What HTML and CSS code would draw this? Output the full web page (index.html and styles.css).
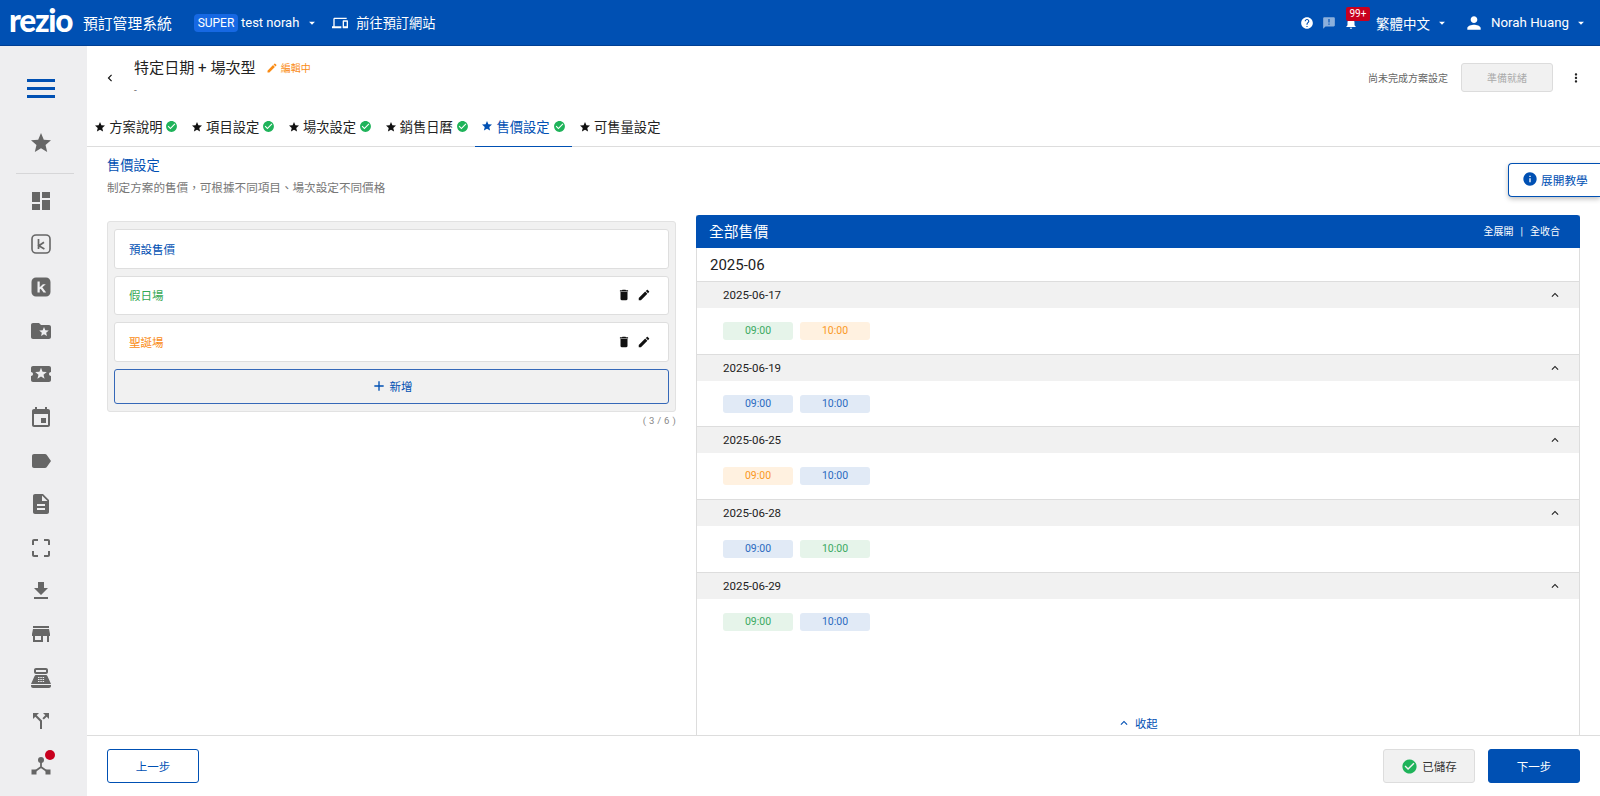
FILE: index.html
```html
<!DOCTYPE html>
<html lang="zh-Hant">
<head>
<meta charset="utf-8">
<title>rezio 預訂管理系統</title>
<link rel="stylesheet" href="styles.css">
</head>
<body>
<svg class="sprite" xmlns="http://www.w3.org/2000/svg">
  <symbol id="i-star" viewBox="0 0 24 24"><path d="M12 17.27L18.18 21l-1.64-7.03L22 9.24l-7.19-.61L12 2 9.19 8.63 2 9.24l5.46 4.73L5.82 21z"/></symbol>
  <symbol id="i-dash" viewBox="0 0 24 24"><path d="M3 13h8V3H3v10zm0 8h8v-6H3v6zm10 0h8V11h-8v10zm0-18v6h8V3h-8z"/></symbol>
  <symbol id="i-k1" viewBox="0 0 24 24"><rect x="3" y="3" width="18" height="18" rx="4" fill="none" stroke="currentColor" stroke-width="1.6"/><path d="M9.5 7v10M15 10.2l-5.2 3.6L15.4 17" fill="none" stroke="currentColor" stroke-width="1.7"/></symbol>
  <symbol id="i-k2" viewBox="0 0 24 24"><path fill-rule="evenodd" d="M7 2.5h10A4.500 4.500 0 0 1 21.500 7v10a4.500 4.500 0 0 1-4.500 4.500H7A4.500 4.500 0 0 1 2.500 17V7A4.500 4.500 0 0 1 7 2.500zM8.500 6.500v11h2.200v-3l1-.8 2.800 3.800h2.700l-3.900-5.200 3.500-3h-2.900l-3.200 2.900V6.500z"/></symbol>
  <symbol id="i-folder" viewBox="0 0 24 24"><path d="M20 6h-8l-2-2H4c-1.100 0-1.990.9-1.990 2L2 18c0 1.100.9 2 2 2h16c1.100 0 2-.9 2-2V8c0-1.100-.9-2-2-2zm-2.060 11L15 15.280 12.060 17l.78-3.330-2.590-2.240 3.410-.29L15 8l1.340 3.140 3.410.29-2.590 2.240.78 3.330z"/></symbol>
  <symbol id="i-ticket" viewBox="0 0 24 24"><path d="M20 12c0-1.100.9-2 2-2V6c0-1.100-.9-2-2-2H4c-1.100 0-1.990.9-1.990 2v4c1.100 0 1.990.9 1.990 2s-.89 2-2 2v4c0 1.100.9 2 2 2h16c1.100 0 2-.9 2-2v-4c-1.100 0-2-.9-2-2zm-4.420 4.800L12 14.500l-3.580 2.300 1.080-4.120-3.290-2.690 4.240-.25L12 5.800l1.540 3.950 4.240.25-3.290 2.690 1.090 4.110z"/></symbol>
  <symbol id="i-event" viewBox="0 0 24 24"><path d="M17 12h-5v5h5v-5zM16 1v2H8V1H6v2H5c-1.110 0-1.990.9-1.990 2L3 19c0 1.100.89 2 2 2h14c1.100 0 2-.9 2-2V5c0-1.100-.9-2-2-2h-1V1h-2zm3 18H5V8h14v11z"/></symbol>
  <symbol id="i-label" viewBox="0 0 24 24"><path d="M17.630 5.840C17.270 5.330 16.670 5 16 5L5 5.010C3.900 5.010 3 5.900 3 7v10c0 1.100.9 1.990 2 1.990L16 19c.67 0 1.270-.33 1.630-.84L22 12l-4.370-6.160z"/></symbol>
  <symbol id="i-desc" viewBox="0 0 24 24"><path d="M14 2H6c-1.100 0-1.990.9-1.990 2L4 20c0 1.100.89 2 1.990 2H18c1.100 0 2-.9 2-2V8l-6-6zm2 16H8v-2h8v2zm0-4H8v-2h8v2zm-3-5V3.500L18.500 9H13z"/></symbol>
  <symbol id="i-crop" viewBox="0 0 24 24"><path d="M3 5v4h2V5h4V3H5c-1.100 0-2 .9-2 2zm2 10H3v4c0 1.100.9 2 2 2h4v-2H5v-4zm14 4h-4v2h4c1.100 0 2-.9 2-2v-4h-2v4zm0-16h-4v2h4v4h2V5c0-1.100-.9-2-2-2z"/></symbol>
  <symbol id="i-down" viewBox="0 0 24 24"><path d="M19 9h-4V3H9v6H5l7 7 7-7zM5 18v2h14v-2H5z"/></symbol>
  <symbol id="i-store" viewBox="0 0 24 24"><path d="M20 4H4v2h16V4zm1 10v-2l-1-5H4l-1 5v2h1v6h10v-6h4v6h2v-6h1zm-9 4H6v-4h6v4z"/></symbol>
  <symbol id="i-pos" viewBox="0 0 24 24"><path fill-rule="evenodd" d="M7 2h10c1.100 0 2 .9 2 2v2c0 1.100-.9 2-2 2H7c-1.100 0-2-.9-2-2V4c0-1.100.9-2 2-2zm0 2v2h10V4H7zM7.300 9h9.400c.8 0 1.500.47 1.830 1.190L22 18H2l3.470-7.810C5.790 9.470 6.510 9 7.300 9zM9 11v1h1.500v-1H9zm2.300 0v1h1.500v-1h-1.500zm2.300 0v1h1.500v-1h-1.500zM9 13v1h1.500v-1H9zm2.300 0v1h1.500v-1h-1.500zm2.300 0v1h1.500v-1h-1.500zM9 15v1h1.500v-1H9zm2.300 0v1h1.500v-1h-1.500zm2.300 0v1h1.500v-1h-1.500zM2 19h20v1c0 1.100-.9 2-2 2H4c-1.100 0-2-.9-2-2v-1z"/></symbol>
  <symbol id="i-split" viewBox="0 0 24 24"><path d="M14 4l2.290 2.290-2.880 2.880 1.420 1.420 2.880-2.880L20 10V4zm-4 0H4v6l2.290-2.290 4.710 4.700V20h2v-8.410l-5.290-5.300z"/></symbol>
  <symbol id="i-hub" viewBox="0 0 24 24"><circle cx="12" cy="7" r="3"/><rect x="2.500" y="16.500" width="5" height="5"/><rect x="16.500" y="16.500" width="5" height="5"/><path d="M12 9v5.500M12 14l-7 5M12 14l7 5" fill="none" stroke="currentColor" stroke-width="1.800"/></symbol>
  <symbol id="i-help" viewBox="0 0 24 24"><path d="M12 2C6.480 2 2 6.480 2 12s4.480 10 10 10 10-4.480 10-10S17.520 2 12 2zm1 17h-2v-2h2v2zm2.070-7.750l-.9.920C13.450 12.900 13 13.500 13 15h-2v-.5c0-1.100.45-2.100 1.170-2.830l1.240-1.260c.37-.36.59-.86.59-1.410 0-1.100-.9-2-2-2s-2 .9-2 2H8c0-2.210 1.790-4 4-4s4 1.790 4 4c0 .88-.36 1.680-.93 2.250z"/></symbol>
  <symbol id="i-feedback" viewBox="0 0 24 24"><path d="M20 2H4c-1.100 0-1.990.9-1.990 2L2 22l4-4h14c1.100 0 2-.9 2-2V4c0-1.100-.9-2-2-2zm-7 9h-2V5h2v6zm0 4h-2v-2h2v2z"/></symbol>
  <symbol id="i-bell" viewBox="0 0 24 24"><path d="M12 22c1.100 0 2-.9 2-2h-4c0 1.100.89 2 2 2zm6-6v-5c0-3.070-1.640-5.640-4.500-6.320V4c0-.83-.67-1.500-1.500-1.500s-1.500.67-1.500 1.500v.68C7.630 5.360 6 7.920 6 11v5l-2 2v1h16v-1l-2-2z"/></symbol>
  <symbol id="i-person" viewBox="0 0 24 24"><path d="M12 12c2.210 0 4-1.790 4-4s-1.790-4-4-4-4 1.790-4 4 1.790 4 4 4zm0 2c-2.670 0-8 1.340-8 4v2h16v-2c0-2.660-5.330-4-8-4z"/></symbol>
  <symbol id="i-devices" viewBox="0 0 24 24"><path d="M4 6h18V4H4c-1.100 0-2 .9-2 2v11H0v3h14v-3H4V6zm19 2h-6c-.55 0-1 .45-1 1v10c0 .55.45 1 1 1h6c.55 0 1-.45 1-1V9c0-.55-.45-1-1-1zm-1 9h-4v-7h4v7z"/></symbol>
  <symbol id="i-edit" viewBox="0 0 24 24"><path d="M3 17.250V21h3.750L17.810 9.940l-3.750-3.750L3 17.250zM20.710 7.040c.39-.39.39-1.020 0-1.410l-2.340-2.340c-.39-.39-1.020-.39-1.410 0l-1.830 1.830 3.750 3.750 1.830-1.830z"/></symbol>
  <symbol id="i-delete" viewBox="0 0 24 24"><path d="M6 19c0 1.100.9 2 2 2h8c1.100 0 2-.9 2-2V7H6v12zM19 4h-3.500l-1-1h-5l-1 1H5v2h14V4z"/></symbol>
  <symbol id="i-check" viewBox="0 0 24 24"><path d="M12 2C6.480 2 2 6.480 2 12s4.480 10 10 10 10-4.480 10-10S17.520 2 12 2zm-2 15l-5-5 1.410-1.410L10 14.170l7.590-7.590L19 8l-9 9z"/></symbol>
  <symbol id="i-info" viewBox="0 0 24 24"><path d="M12 2C6.480 2 2 6.480 2 12s4.480 10 10 10 10-4.480 10-10S17.520 2 12 2zm1 15h-2v-6h2v6zm0-8h-2V7h2v2z"/></symbol>
  <symbol id="i-less" viewBox="0 0 24 24"><path d="M12 8l-6 6 1.410 1.410L12 10.830l4.590 4.580L18 14z"/></symbol>
  <symbol id="i-left" viewBox="0 0 24 24"><path d="M15.410 7.410L14 6l-6 6 6 6 1.410-1.410L10.830 12z"/></symbol>
  <symbol id="i-more" viewBox="0 0 24 24"><path d="M12 8c1.100 0 2-.9 2-2s-.9-2-2-2-2 .9-2 2 .9 2 2 2zm0 2c-1.100 0-2 .9-2 2s.9 2 2 2 2-.9 2-2-.9-2-2-2zm0 6c-1.100 0-2 .9-2 2s.9 2 2 2 2-.9 2-2-.9-2-2-2z"/></symbol>
  <symbol id="i-caret" viewBox="0 0 24 24"><path d="M7 10l5 5 5-5z"/></symbol>
  <symbol id="i-add" viewBox="0 0 24 24"><path d="M19 13h-6v6h-2v-6H5v-2h6V5h2v6h6v2z"/></symbol>
</svg>

<header class="topbar">
  <span class="logo">rezio</span>
  <span class="app-name">預訂管理系統</span>
  <span class="super">SUPER</span>
  <span class="account">test norah</span>
  <svg class="caret caret-account"><use href="#i-caret"/></svg>
  <svg class="devices"><use href="#i-devices"/></svg>
  <span class="site-link">前往預訂網站</span>
  <div class="top-right">
    <svg class="top-icon"><use href="#i-help"/></svg>
    <svg class="top-icon dim"><use href="#i-feedback"/></svg>
    <span class="bell">
      <svg class="top-icon"><use href="#i-bell"/></svg>
      <span class="bell-badge">99+</span>
    </span>
    <span class="lang">繁體中文</span>
    <svg class="caret caret-lang"><use href="#i-caret"/></svg>
    <svg class="person"><use href="#i-person"/></svg>
    <span class="user">Norah Huang</span>
    <svg class="caret caret-user"><use href="#i-caret"/></svg>
  </div>
</header>

<div class="shell">
  <nav class="sidebar">
    <div class="menu-btn"><span></span><span></span><span></span></div>
    <a class="nav-item nav-fav"><svg><use href="#i-star"/></svg></a>
    <div class="nav-divider"></div>
    <a class="nav-item"><svg><use href="#i-dash"/></svg></a>
    <a class="nav-item"><svg><use href="#i-k1"/></svg></a>
    <a class="nav-item"><svg><use href="#i-k2"/></svg></a>
    <a class="nav-item"><svg><use href="#i-folder"/></svg></a>
    <a class="nav-item"><svg><use href="#i-ticket"/></svg></a>
    <a class="nav-item"><svg><use href="#i-event"/></svg></a>
    <a class="nav-item"><svg><use href="#i-label"/></svg></a>
    <a class="nav-item"><svg><use href="#i-desc"/></svg></a>
    <a class="nav-item"><svg><use href="#i-crop"/></svg></a>
    <a class="nav-item"><svg><use href="#i-down"/></svg></a>
    <a class="nav-item"><svg><use href="#i-store"/></svg></a>
    <a class="nav-item"><svg><use href="#i-pos"/></svg></a>
    <a class="nav-item"><svg><use href="#i-split"/></svg></a>
    <a class="nav-item nav-hub"><svg><use href="#i-hub"/></svg><span class="nav-dot"></span></a>
  </nav>

  <main class="main">
    <div class="page-head">
      <svg class="back"><use href="#i-left"/></svg>
      <div class="title-block">
        <div class="title-row">
          <h1 class="page-title">特定日期 + 場次型</h1>
          <svg class="edit-icon"><use href="#i-edit"/></svg>
          <span class="edit-text">編輯中</span>
        </div>
        <div class="subtitle">-</div>
      </div>
      <div class="head-actions">
        <span class="incomplete">尚未完成方案設定</span>
        <button class="ready">準備就緒</button>
        <svg class="more"><use href="#i-more"/></svg>
      </div>
    </div>

    <div class="tabs">
      <a class="tab"><svg class="tab-star"><use href="#i-star"/></svg><span>方案說明</span><svg class="tab-check"><use href="#i-check"/></svg></a>
      <a class="tab"><svg class="tab-star"><use href="#i-star"/></svg><span>項目設定</span><svg class="tab-check"><use href="#i-check"/></svg></a>
      <a class="tab"><svg class="tab-star"><use href="#i-star"/></svg><span>場次設定</span><svg class="tab-check"><use href="#i-check"/></svg></a>
      <a class="tab"><svg class="tab-star"><use href="#i-star"/></svg><span>銷售日曆</span><svg class="tab-check"><use href="#i-check"/></svg></a>
      <a class="tab tab-active"><svg class="tab-star"><use href="#i-star"/></svg><span>售價設定</span><svg class="tab-check"><use href="#i-check"/></svg></a>
      <a class="tab tab-last"><svg class="tab-star"><use href="#i-star"/></svg><span>可售量設定</span></a>
    </div>

    <section class="content">
      <h2 class="section-title">售價設定</h2>
      <p class="section-desc">制定方案的售價&#xFF0C;可根據不同項目、場次設定不同價格</p>
      <button class="tutorial"><svg><use href="#i-info"/></svg>展開教學</button>

      <div class="columns">
        <div class="left-col">
          <div class="plan-panel">
            <div class="plan plan-blue">預設售價</div>
            <div class="plan plan-green">假日場<span class="plan-actions"><svg><use href="#i-delete"/></svg><svg><use href="#i-edit"/></svg></span></div>
            <div class="plan plan-orange">聖誕場<span class="plan-actions"><svg><use href="#i-delete"/></svg><svg><use href="#i-edit"/></svg></span></div>
            <button class="add-plan"><svg><use href="#i-add"/></svg>新增</button>
          </div>
          <div class="count">( 3 / 6 )</div>
        </div>

        <div class="right-col">
          <div class="all-head">
            <span class="all-title">全部售價</span>
            <span class="all-links">全展開<i>|</i>全收合</span>
          </div>
          <div class="month">2025-06</div>
          <div class="day">
            <div class="day-head">2025-06-17<svg><use href="#i-less"/></svg></div>
            <div class="day-body"><span class="tag tag-green">09:00</span><span class="tag tag-orange">10:00</span></div>
          </div>
          <div class="day">
            <div class="day-head">2025-06-19<svg><use href="#i-less"/></svg></div>
            <div class="day-body"><span class="tag tag-blue">09:00</span><span class="tag tag-blue">10:00</span></div>
          </div>
          <div class="day">
            <div class="day-head">2025-06-25<svg><use href="#i-less"/></svg></div>
            <div class="day-body"><span class="tag tag-orange">09:00</span><span class="tag tag-blue">10:00</span></div>
          </div>
          <div class="day">
            <div class="day-head">2025-06-28<svg><use href="#i-less"/></svg></div>
            <div class="day-body"><span class="tag tag-blue">09:00</span><span class="tag tag-green">10:00</span></div>
          </div>
          <div class="day day-last">
            <div class="day-head">2025-06-29<svg><use href="#i-less"/></svg></div>
            <div class="day-body"><span class="tag tag-green">09:00</span><span class="tag tag-blue">10:00</span></div>
          </div>
          <div class="collapse"><svg><use href="#i-less"/></svg>收起</div>
        </div>
      </div>
    </section>

    <footer class="footer">
      <button class="btn btn-outline">上一步</button>
      <div class="footer-right">
        <button class="btn btn-saved"><svg><use href="#i-check"/></svg>已儲存</button>
        <button class="btn btn-primary">下一步</button>
      </div>
    </footer>
  </main>
</div>
</body>
</html>
```
FILE: styles.css
```css
* { box-sizing: border-box; }
html, body { margin: 0; height: 100%; }
body {
  width: 1600px;
  height: 796px;
  overflow: hidden;
  display: flex;
  flex-direction: column;
  font-family: Roboto, "Noto Sans CJK TC", sans-serif;
  color: #222;
  background: #fff;
}
svg { fill: currentColor; display: block; flex: none; }
.sprite { display: none; }
button { font-family: inherit; cursor: pointer; }
h1, h2, p { margin: 0; font-weight: 400; }

/* top bar */
.topbar {
  flex: none;
  height: 46px;
  display: flex;
  align-items: center;
  padding-left: 9px;
  background: #0050b3;
  border-bottom: 1px solid #003f94;
  color: #fff;
}
.logo {
  width: 65px;
  font-family: Lato, sans-serif;
  font-weight: 900;
  font-size: 31.500px;
  line-height: 30px;
  letter-spacing: -1.200px;
  margin-top: -6px;
}
.app-name { margin-left: 9px; width: 93px; font-size: 14.800px; margin-top: -1px; }
.super {
  margin-left: 18px;
  width: 44px;
  height: 18px;
  border-radius: 4px;
  background: #1668e3;
  font-size: 12px;
  line-height: 18px;
  text-align: center;
}
.account { margin-left: 3px; font-size: 13px; }
.caret { width: 14px; height: 14px; }
.caret-account { margin-left: 6px; }
.devices { width: 16px; height: 16px; margin-left: 13px; }
.site-link { margin-left: 8px; font-size: 13.200px; }
.top-right { margin-left: auto; display: flex; align-items: center; }
.top-icon { width: 14px; height: 14px; }
.top-icon.dim { margin-left: 8px; opacity: .55; }
.bell { position: relative; margin-left: 8px; display: block; }
.bell-badge {
  position: absolute;
  left: 2px;
  top: -9px;
  width: 24px;
  height: 14px;
  border-radius: 2px;
  background: #c8001e;
  font-size: 10px;
  line-height: 14px;
  text-align: center;
}
.lang { margin-left: 18px; font-size: 13.500px; }
.caret-lang { margin-left: 5px; }
.person { width: 20px; height: 20px; margin-left: 15px; }
.user { margin-left: 7px; font-size: 13.300px; }
.caret-user { margin: 0 12px 0 5px; }

/* shell */
.shell { flex: 1; min-height: 0; display: flex; }
.sidebar {
  flex: none;
  width: 87px;
  background: #eeeef0;
  padding-top: 20px;
  color: #666;
  display: flex;
  flex-direction: column;
}
.menu-btn {
  height: 44px;
  padding-left: 27px;
  display: flex;
  flex-direction: column;
  justify-content: center;
  gap: 5px;
}
.menu-btn span { display: block; width: 28px; height: 3px; background: #0050b3; }
.nav-item {
  height: 43.400px;
  flex: none;
  display: flex;
  align-items: center;
  justify-content: center;
  padding-right: 5px;
  position: relative;
}
.nav-item svg { width: 24px; height: 24px; }
.nav-fav { margin-top: 11px; }
.nav-divider { height: 1px; width: 58px; margin: 9px 0 4.500px 16px; background: #d6d6d8; flex: none; }
.nav-dot {
  position: absolute;
  left: 45px;
  top: 7px;
  width: 10px;
  height: 10px;
  border-radius: 50%;
  background: #c8001e;
}

/* main */
.main { flex: 1; min-width: 0; display: flex; flex-direction: column; position: relative; }
.page-head { flex: none; height: 67px; display: flex; align-items: flex-start; padding-right: 17px; }
.back { width: 14px; height: 14px; margin: 25px 0 0 16px; color: #111; }
.title-block { margin-left: 17px; padding-top: 12px; }
.title-row { display: flex; align-items: center; height: 20px; }
.page-title { font-size: 15.100px; line-height: 20px; color: #222; }
.edit-icon { width: 12px; height: 12px; margin-left: 10px; color: #fa8c16; }
.edit-text { margin-left: 3px; font-size: 10px; color: #fa8c16; margin-top: -1px; }
.subtitle { font-size: 10px; line-height: 14px; color: #777; margin-top: 6px; }
.head-actions { margin-left: auto; display: flex; align-items: center; padding-top: 17px; }
.incomplete { font-size: 10px; color: #666; }
.ready {
  width: 92px;
  height: 29px;
  margin-left: 13px;
  padding: 0;
  background: #f1f1f1;
  border: 1px solid #dcdcdc;
  border-radius: 3px;
  font-size: 10px;
  color: #aaa;
}
.more { width: 14px; height: 14px; margin-left: 16px; color: #222; }

/* tabs */
.tabs { flex: none; height: 34px; padding-left: 1px; display: flex; border-bottom: 1px solid #ddd; }
.tab {
  width: 96.800px;
  height: 34px;
  display: flex;
  align-items: center;
  justify-content: center;
  gap: 3px;
  padding-bottom: 7px;
  font-size: 13.300px;
  color: #222;
}
.tab-last { width: auto; padding-left: 7px; }
.tab-star { width: 12px; height: 12px; color: #111; }
.tab-check { width: 13px; height: 13px; color: #1fb35a; }
.tab-active { color: #0050b3; border-bottom: 1.500px solid #0050b3; }
.tab-active .tab-star { color: #0050b3; }

/* content */
.content { flex: 1; min-height: 0; overflow: hidden; padding: 0 20px; position: relative; }
.section-title { margin-top: 10px; font-size: 13.200px; line-height: 18px; color: #0050b3; }
.section-desc { margin-top: 5px; font-size: 11.600px; line-height: 16px; color: #777; }
.tutorial {
  position: absolute;
  right: 0;
  top: 16px;
  width: 92px;
  height: 34px;
  padding: 0 0 2px 13px;
  display: flex;
  align-items: center;
  gap: 3px;
  background: #fff;
  border: 1px solid #0050b3;
  border-right: 0;
  border-radius: 4px 0 0 4px;
  box-shadow: 0 2px 5px rgba(0, 0, 0, .25);
  font-size: 11.700px;
  color: #0050b3;
}
.tutorial svg { width: 16px; height: 16px; }
.columns { display: grid; grid-template-columns: 569px 884px; gap: 20px; margin-top: 19px; align-items: start; }

/* left */
.plan-panel {
  margin-top: 6px;
  height: 191px;
  padding: 7px 6px;
  background: #f1f1f1;
  border: 1px solid #e2e2e2;
  border-radius: 3px;
  display: flex;
  flex-direction: column;
  gap: 7px;
}
.plan {
  height: 39.500px;
  flex: none;
  display: flex;
  align-items: center;
  justify-content: space-between;
  padding: 0 17px 0 14px;
  background: #fff;
  border: 1px solid #dedede;
  border-radius: 3px;
  font-size: 11.500px;
}
.plan-blue { color: #0050b3; }
.plan-green { color: #34a853; }
.plan-orange { color: #fa8c16; }
.plan-actions { display: flex; gap: 6px; color: #111; }
.plan-actions svg { width: 14px; height: 14px; }
.add-plan {
  height: 35.500px;
  flex: none;
  display: flex;
  align-items: center;
  justify-content: center;
  gap: 3px;
  background: #f1f1f1;
  border: 1px solid #3568b8;
  border-radius: 3px;
  font-size: 11.500px;
  color: #0050b3;
}
.add-plan svg { width: 16px; height: 16px; }
.count { margin-top: 3px; text-align: right; font-size: 9.500px; letter-spacing: .3px; color: #888; }

/* right */
.right-col {
  height: 560px;
  border: 1px solid #ddd;
  border-top: 0;
  display: flex;
  flex-direction: column;
  position: relative;
}
.all-head {
  flex: none;
  height: 33px;
  margin: 0 -1px;
  padding: 0 20px 3px 13px;
  display: flex;
  align-items: center;
  justify-content: space-between;
  background: #0050b3;
  border-radius: 3px 3px 0 0;
  color: #fff;
}
.all-title { font-size: 14.800px; }
.all-links { font-size: 10px; }
.all-links i { font-style: normal; margin: 0 7px; }
.month {
  flex: none;
  height: 34px;
  padding-left: 13px;
  display: flex;
  align-items: center;
  border-bottom: 1px solid #ddd;
  font-size: 15px;
  color: #222;
}
.day { flex: none; height: 72.700px; border-bottom: 1px solid #ddd; }
.day-last { border-bottom: 0; }
.day-head {
  height: 26px;
  padding: 0 17px 0 26px;
  display: flex;
  align-items: center;
  justify-content: space-between;
  background: #f1f1f1;
  font-size: 11.500px;
  color: #222;
}
.day-head svg { width: 14px; height: 14px; color: #222; }
.day-body { padding: 14px 0 0 26px; display: flex; gap: 7px; }
.tag {
  width: 70px;
  height: 18px;
  border-radius: 3px;
  font-size: 10.500px;
  line-height: 18px;
  text-align: center;
}
.tag-green { background: #e6f4ea; color: #3aa962; }
.tag-orange { background: #fff1e0; color: #fa981f; }
.tag-blue { background: #e1eaf6; color: #2a69c0; }
.collapse {
  position: absolute;
  left: 420px;
  top: 500px;
  display: flex;
  align-items: center;
  gap: 4px;
  font-size: 11.300px;
  color: #0050b3;
}
.collapse svg { width: 14px; height: 14px; }

/* footer */
.footer {
  flex: none;
  height: 61px;
  padding: 13px 20px 0;
  display: flex;
  align-items: flex-start;
  justify-content: space-between;
  border-top: 1px solid #ddd;
  background: #fff;
}
.footer-right { display: flex; gap: 13px; }
.btn {
  width: 92px;
  height: 34px;
  padding: 0;
  border-radius: 3px;
  display: flex;
  align-items: center;
  justify-content: center;
  font-size: 11.500px;
}
.btn-outline { background: #fff; border: 1px solid #0050b3; color: #0050b3; }
.btn-saved { gap: 4px; background: #f1f1f1; border: 1px solid #ddd; color: #333; }
.btn-saved svg { width: 17px; height: 17px; color: #1fb35a; }
.btn-primary { background: #0050b3; border: 1px solid #0050b3; color: #fff; }
```
